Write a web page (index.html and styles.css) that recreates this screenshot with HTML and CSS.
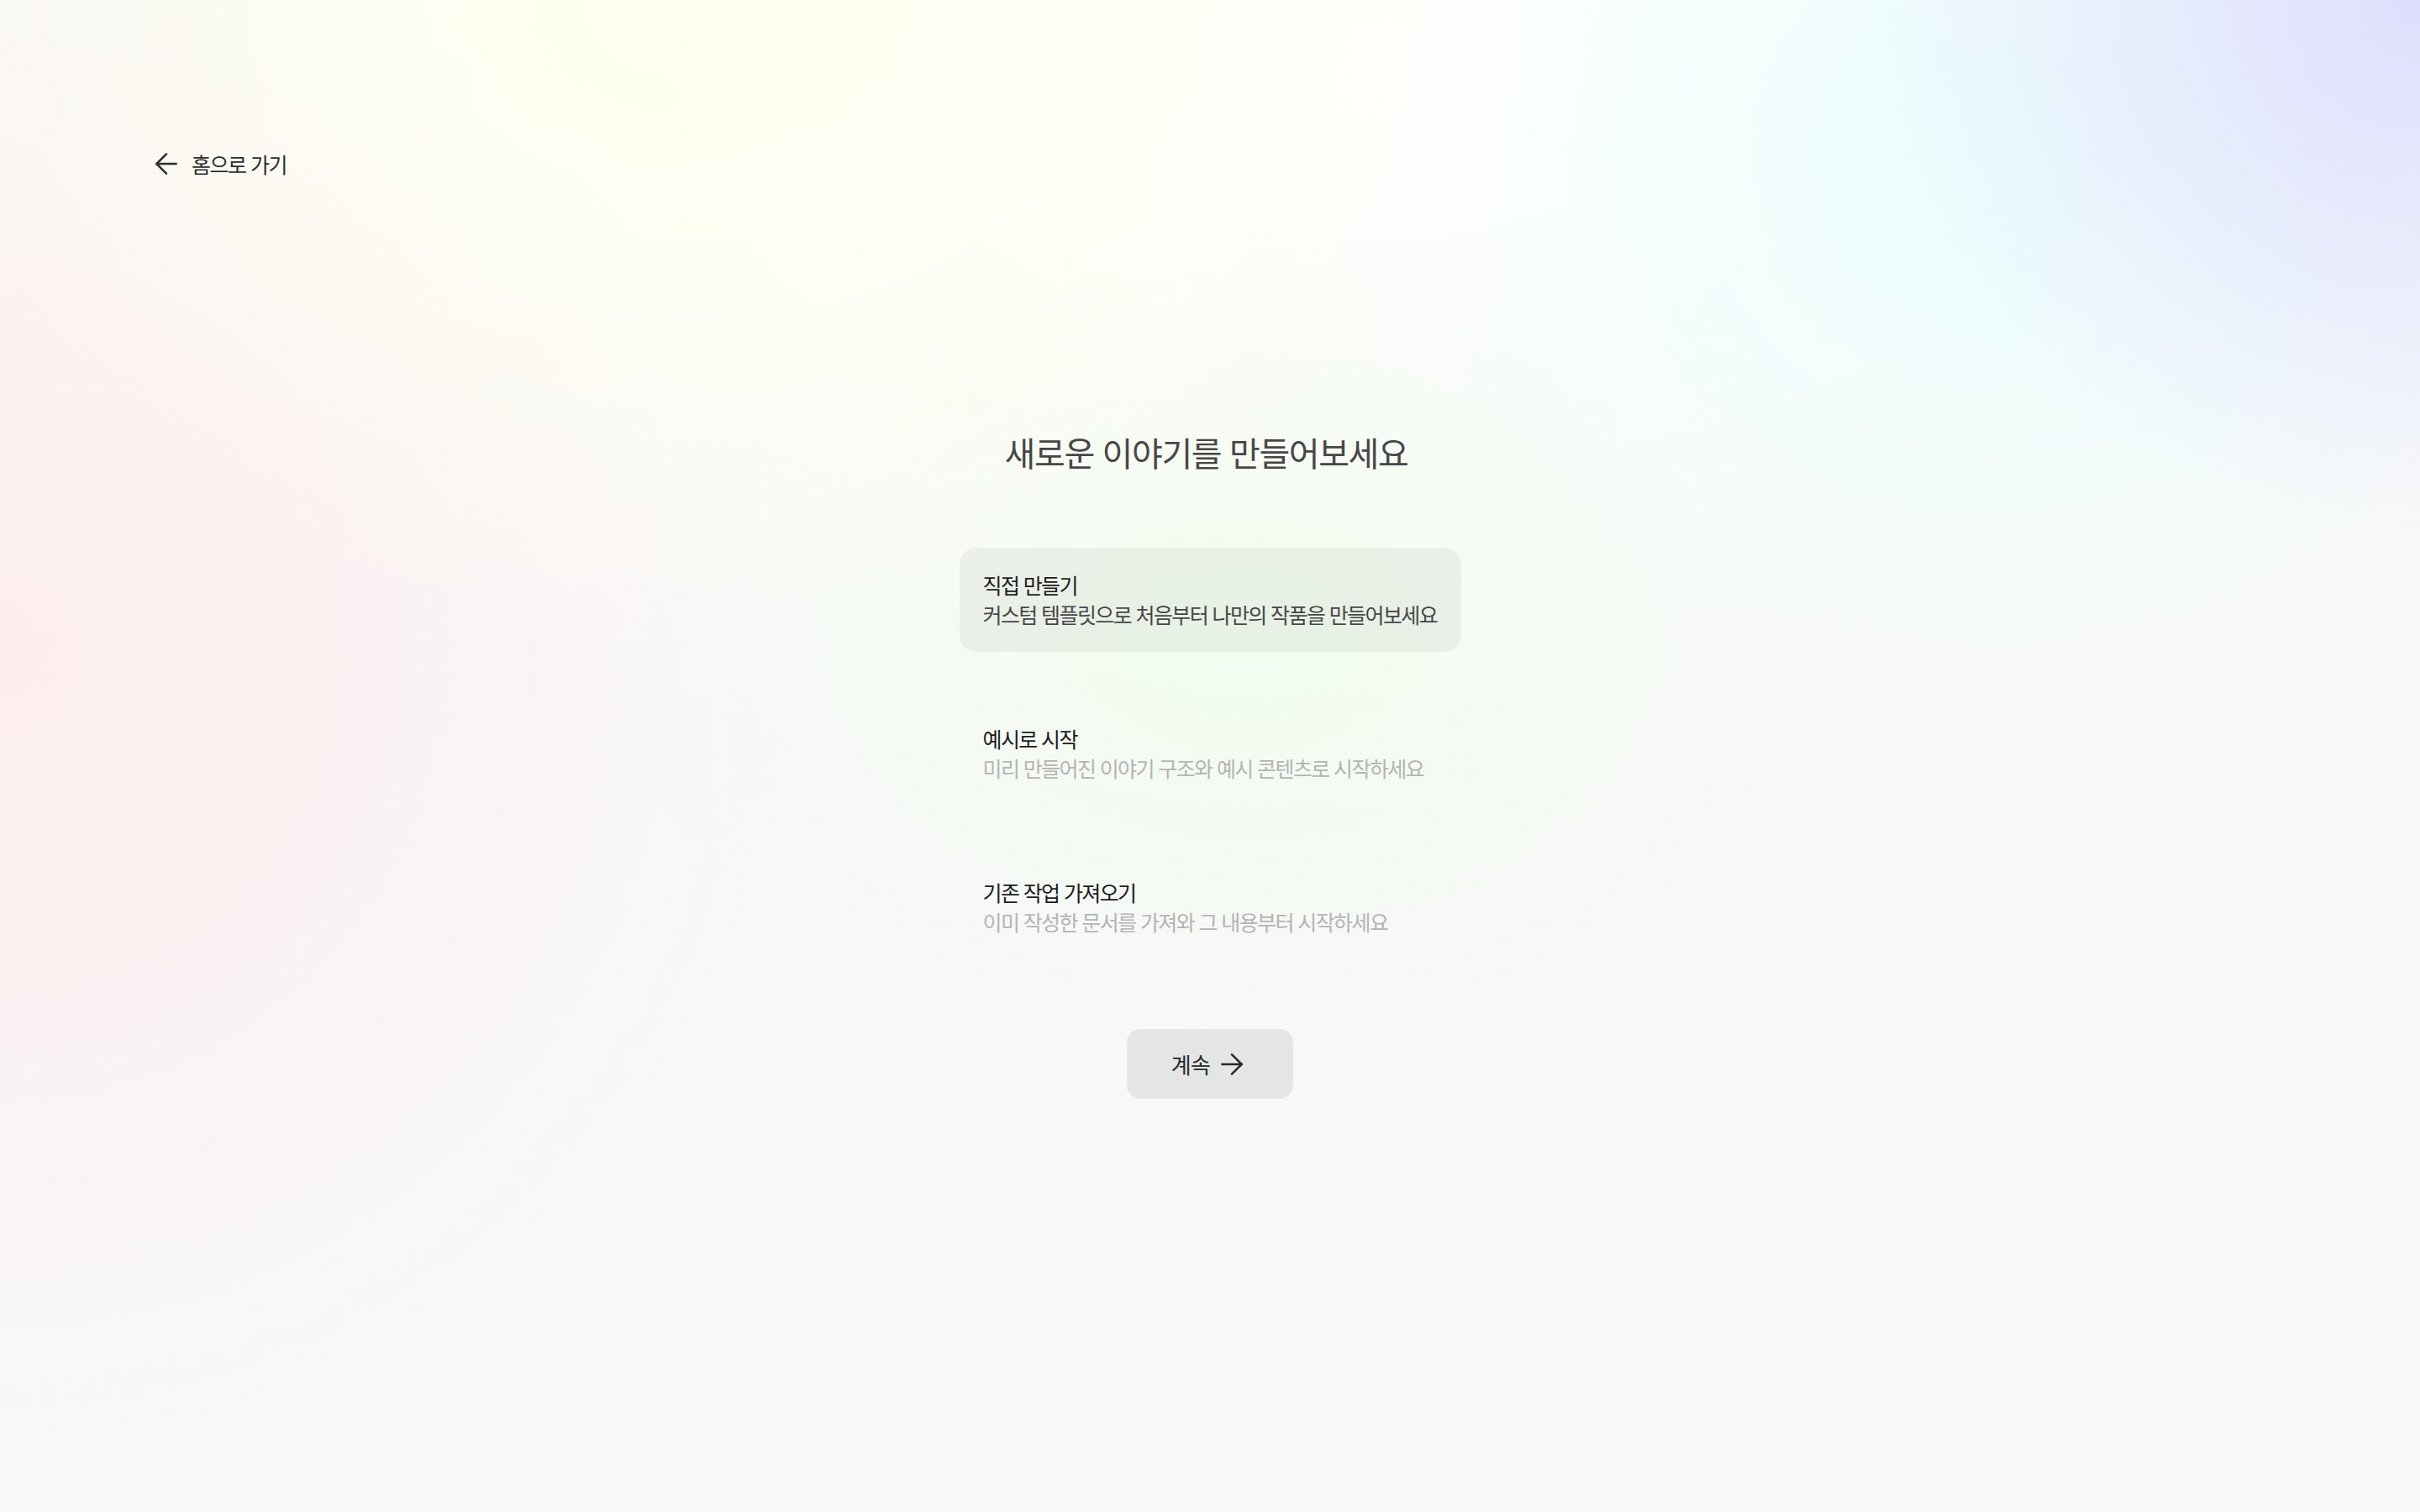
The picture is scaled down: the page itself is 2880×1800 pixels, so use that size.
FILE: index.html
```html
<!DOCTYPE html>
<html lang="ko">
<head>
  <meta charset="UTF-8" />
  <title>새로운 이야기</title>
  <meta name="viewport" content="width=device-width, initial-scale=1.0" />
  <link rel="stylesheet" href="styles.css">
</head>
<body>

  <header class="topbar">
    <a href="#" class="back-link">
      <svg viewBox="0 0 24 24" fill="none" stroke="currentColor" stroke-width="1.5" stroke-linecap="round" stroke-linejoin="round">
        <path d="m12 19-7-7 7-7"/><path d="M19 12H5"/>
      </svg>
      <span>홈으로 가기</span>
    </a>
  </header>

  <main class="wizard">
    <h1>새로운 이야기를 만들어보세요</h1>

    <div class="options">
      <div class="option selected">
        <div class="option-title">직접 만들기</div>
        <div class="option-desc">커스텀 템플릿으로 처음부터 나만의 작품을 만들어보세요</div>
      </div>
      <div class="option">
        <div class="option-title">예시로 시작</div>
        <div class="option-desc">미리 만들어진 이야기 구조와 예시 콘텐츠로 시작하세요</div>
      </div>
      <div class="option">
        <div class="option-title">기존 작업 가져오기</div>
        <div class="option-desc">이미 작성한 문서를 가져와 그 내용부터 시작하세요</div>
      </div>
    </div>

    <button class="btn-next">
      <span>계속</span>
      <svg viewBox="0 0 24 24" fill="none" stroke="currentColor" stroke-width="1.5" stroke-linecap="round" stroke-linejoin="round">
        <path d="M5 12h14"/><path d="m12 5 7 7-7 7"/>
      </svg>
    </button>
  </main>

</body>
</html>
```

FILE: styles.css
```css
* { margin: 0; padding: 0; box-sizing: border-box; }

html, body { min-height: 100%; }

body {
  min-height: 100vh;
  font-family: "Noto Sans CJK KR", "Noto Sans", sans-serif;
  color: #2a2a2a;
  background:
    radial-gradient(ellipse 680px 640px at 2880px 0, #dedefd, rgba(222, 222, 253, 0)),
    radial-gradient(ellipse 720px 680px at 2380px 180px, #ebfffd, rgba(235, 255, 253, 0)),
    radial-gradient(ellipse 1050px 760px at 820px 0, #ffffee, rgba(255, 255, 238, 0)),
    radial-gradient(ellipse 950px 950px at 0 780px, #fdeeee, rgba(253, 238, 238, 0)),
    radial-gradient(ellipse 760px 520px at 1480px 760px, rgba(241, 252, 238, 0.95), rgba(241, 252, 238, 0)),
    radial-gradient(ellipse 1700px 950px at 1650px 80px, #ffffff, rgba(255, 255, 255, 0)),
    #f8f8f8;
}

/* top bar */
.topbar { padding: 170px 0 0 178px; }

.back-link {
  display: inline-flex; align-items: center; gap: 10px;
  color: #2e2e2e; text-decoration: none;
  font-size: 25px; line-height: 50px; letter-spacing: -1.5px;
}
.back-link svg { width: 40px; height: 40px; }

/* main */
.wizard {
  display: flex; flex-direction: column; align-items: center;
  padding-top: 290px;
}

.wizard h1 {
  font-size: 40px; line-height: 56px; font-weight: 400;
  color: #474747; letter-spacing: -0.035em;
  margin: 0 9px 86px 0;
}

.options {
  display: flex; flex-direction: column; gap: 59px;
  width: 597px;
}

.option {
  padding: 27px 28px; border-radius: 20px; cursor: pointer;
}
.option.selected { background: rgba(0, 0, 0, 0.045); }

.option-title {
  font-size: 25px; line-height: 35px; font-weight: 400;
  color: #1c1c1c; letter-spacing: -1.6px;
}
.option-desc {
  font-size: 25px; line-height: 35px;
  color: #b4b4b4; letter-spacing: -1.6px; white-space: nowrap;
}
.option.selected .option-desc { color: #474747; }

.btn-next {
  margin-top: 83px;
  width: 198px; height: 83px;
  display: flex; align-items: center; justify-content: center; gap: 6px;
  background: #e4e5e5; border: none; border-radius: 16px;
  font-family: inherit; font-size: 26px; color: #2a2a2a; letter-spacing: -0.03em;
  cursor: pointer;
}
.btn-next svg { width: 40px; height: 40px; }
```
